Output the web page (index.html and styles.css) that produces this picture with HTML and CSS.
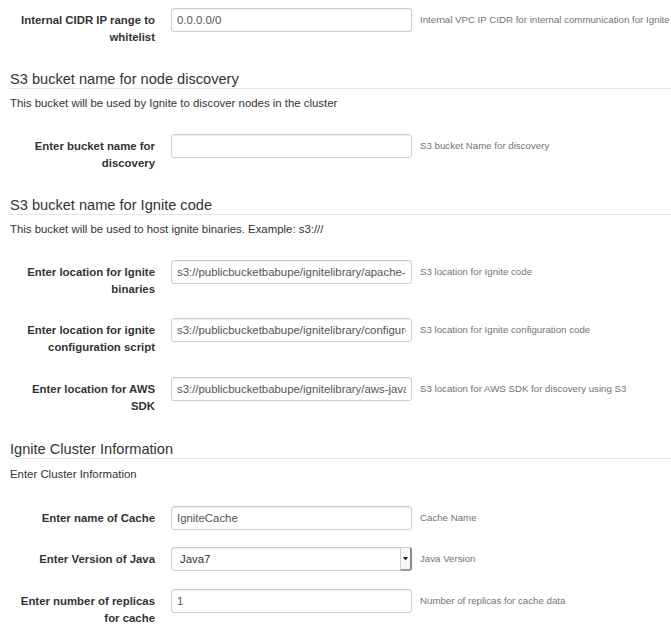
FILE: index.html
```html
<!DOCTYPE html>
<html>
<head>
<meta charset="utf-8">
<link rel="stylesheet" href="styles.css">
</head>
<body>
<div class="page">
  <div class="group">
    <label class="lbl">Internal CIDR IP range to whitelist</label>
    <input class="ctl" type="text" value="0.0.0.0/0">
    <span class="help">Internal VPC IP CIDR for internal communication for Ignite</span>
  </div>

  <div class="section">
    <h3 class="legend">S3 bucket name for node discovery</h3>
    <p class="desc">This bucket will be used by Ignite to discover nodes in the cluster</p>
  </div>
  <div class="group">
    <label class="lbl">Enter bucket name for discovery</label>
    <input class="ctl" type="text" value="">
    <span class="help">S3 bucket Name for discovery</span>
  </div>

  <div class="section">
    <h3 class="legend">S3 bucket name for Ignite code</h3>
    <p class="desc">This bucket will be used to host ignite binaries. Example: s3:///</p>
  </div>
  <div class="group">
    <label class="lbl">Enter location for Ignite binaries</label>
    <input class="ctl" type="text" value="s3://publicbucketbabupe/ignitelibrary/apache-ignite-fabric-1.5.0.final-bin.zip">
    <span class="help">S3 location for Ignite code</span>
  </div>
  <div class="group">
    <label class="lbl">Enter location for ignite configuration script</label>
    <input class="ctl" type="text" value="s3://publicbucketbabupe/ignitelibrary/configure-ignite.sh">
    <span class="help">S3 location for Ignite configuration code</span>
  </div>
  <div class="group">
    <label class="lbl">Enter location for AWS SDK</label>
    <input class="ctl" type="text" value="s3://publicbucketbabupe/ignitelibrary/aws-java-sdk.zip">
    <span class="help">S3 location for AWS SDK for discovery using S3</span>
  </div>

  <div class="section section-last">
    <h3 class="legend">Ignite Cluster Information</h3>
    <p class="desc">Enter Cluster Information</p>
  </div>
  <div class="group">
    <label class="lbl">Enter name of Cache</label>
    <input class="ctl" type="text" value="IgniteCache">
    <span class="help">Cache Name</span>
  </div>
  <div class="group">
    <label class="lbl">Enter Version of Java</label>
    <div class="selwrap">
      <select class="ctl sel">
        <option>Java7</option>
        <option>Java8</option>
      </select>
      <span class="selbtn"><svg width="5" height="4" viewBox="0 0 5 4"><path d="M0 0H5L2.5 3.5Z" fill="#222"/></svg></span>
    </div>
    <span class="help">Java Version</span>
  </div>
  <div class="group">
    <label class="lbl">Enter number of replicas for cache</label>
    <input class="ctl" type="text" value="1">
    <span class="help">Number of replicas for cache data</span>
  </div>
</div>
</body>
</html>
```

FILE: styles.css
```css
* { box-sizing: border-box; }
html, body { margin: 0; padding: 0; background: #fff; }
body {
  font-family: "Liberation Sans", Arial, Helvetica, sans-serif;
  font-size: 11.4px;
  color: #333;
  overflow: hidden;
}
.page {
  padding: 8px 0 0 10px;
}
.group {
  display: flex;
  align-items: flex-start;
  margin-bottom: 17.5px;
}
.lbl {
  flex: 0 0 145px;
  width: 145px;
  margin-right: 16px;
  padding: 4px 0 3px;
  text-align: right;
  font-weight: bold;
  line-height: 17px;
  color: #333;
}
.ctl {
  flex: 0 0 241px;
  width: 241px;
  height: 24px;
  margin: 0;
  padding: 0 5px;
  border: 1px solid #ccc;
  border-radius: 3px;
  background: #fff;
  box-shadow: inset 0 1px 1px rgba(0,0,0,0.075);
  font-family: "Liberation Sans", Arial, Helvetica, sans-serif;
  font-size: 11.4px;
  color: #555;
  outline: none;
}
.help {
  margin-left: 8px;
  padding-top: 5px;
  font-size: 9.7px;
  line-height: 14px;
  color: #737373;
  white-space: nowrap;
}
.selwrap {
  position: relative;
  flex: 0 0 241px;
  width: 241px;
  height: 24px;
}
.sel {
  display: block;
  -webkit-appearance: none;
  appearance: none;
  padding-left: 8px;
  color: #333;
}
.selbtn {
  position: absolute;
  right: 0;
  top: 0;
  width: 12px;
  height: 24px;
  background: linear-gradient(#fff, #f4f4f4);
  border-left: 1px solid #d0d0d0;
  border-right: 2px solid #8a8a8a;
  border-bottom: 2px solid #9a9a9a;
  border-top: 1px solid #ccc;
  border-radius: 0 3px 3px 0;
  display: flex;
  align-items: center;
  justify-content: center;
}
.selbtn svg { display: block; margin-top: 1px; }
.section {
  padding-top: 3.5px;
}
.section-last {
  padding-top: 5px;
}
.legend {
  margin: 0;
  padding: 0;
  font-size: 14.6px;
  font-weight: normal;
  line-height: 18px;
  color: #333;
  border-bottom: 1px solid #e5e5e5;
}
.desc {
  margin: 5.7px 0 23.3px;
  line-height: 16px;
  font-size: 11.4px;
  color: #333;
}
.section-last .desc {
  margin-top: 7px;
}
```
